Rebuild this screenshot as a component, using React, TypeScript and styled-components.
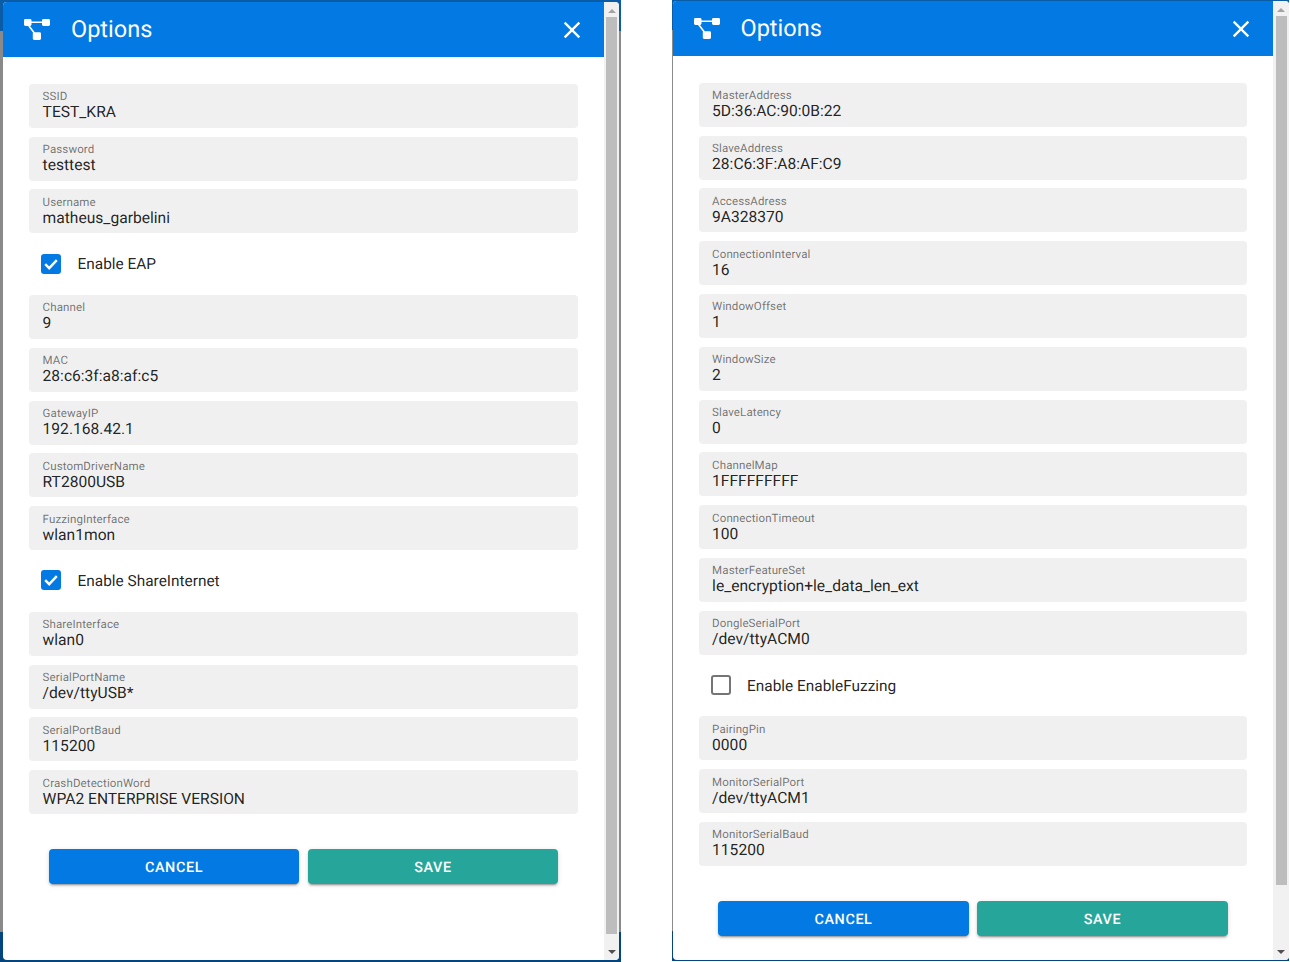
import React from "react";
import styled, { createGlobalStyle } from "styled-components";

type Item = { label: string; value: string } | { check: string; on: boolean };

const wifiItems: Item[] = [
  { label: "SSID", value: "TEST_KRA" },
  { label: "Password", value: "testtest" },
  { label: "Username", value: "matheus_garbelini" },
  { check: "Enable EAP", on: true },
  { label: "Channel", value: "9" },
  { label: "MAC", value: "28:c6:3f:a8:af:c5" },
  { label: "GatewayIP", value: "192.168.42.1" },
  { label: "CustomDriverName", value: "RT2800USB" },
  { label: "FuzzingInterface", value: "wlan1mon" },
  { check: "Enable ShareInternet", on: true },
  { label: "ShareInterface", value: "wlan0" },
  { label: "SerialPortName", value: "/dev/ttyUSB*" },
  { label: "SerialPortBaud", value: "115200" },
  { label: "CrashDetectionWord", value: "WPA2 ENTERPRISE VERSION" },
];

const bleItems: Item[] = [
  { label: "MasterAddress", value: "5D:36:AC:90:0B:22" },
  { label: "SlaveAddress", value: "28:C6:3F:A8:AF:C9" },
  { label: "AccessAdress", value: "9A328370" },
  { label: "ConnectionInterval", value: "16" },
  { label: "WindowOffset", value: "1" },
  { label: "WindowSize", value: "2" },
  { label: "SlaveLatency", value: "0" },
  { label: "ChannelMap", value: "1FFFFFFFFF" },
  { label: "ConnectionTimeout", value: "100" },
  { label: "MasterFeatureSet", value: "le_encryption+le_data_len_ext" },
  { label: "DongleSerialPort", value: "/dev/ttyACM0" },
  { check: "Enable EnableFuzzing", on: false },
  { label: "PairingPin", value: "0000" },
  { label: "MonitorSerialPort", value: "/dev/ttyACM1" },
  { label: "MonitorSerialBaud", value: "115200" },
];

function HubIcon() {
  return (
    <svg width="26" height="21" viewBox="0 0 26 21" fill="#fff">
      <rect x="0" y="0" width="7.5" height="7" rx="1.4" />
      <rect x="18" y="0" width="8" height="7" rx="1.4" />
      <rect x="8.8" y="13.3" width="8.2" height="7.7" rx="1.4" />
      <path d="M7 2.4h11.5v1.7H7z" />
      <path d="M3.6 6.6l1.5-.9 6 8-1.5.9z" />
    </svg>
  );
}

function CloseIcon() {
  return (
    <svg width="28" height="28" viewBox="0 0 24 24" fill="#fff">
      <path d="M19 6.41L17.59 5 12 10.59 6.41 5 5 6.41 10.59 12 5 17.59 6.41 19 12 13.41 17.59 19 19 17.59 13.41 12z" />
    </svg>
  );
}

function OptionsDialog({
  items,
  thumb,
  barWidth,
}: {
  items: Item[];
  thumb: number;
  barWidth: number;
}) {
  return (
    <Dialog>
      <Main>
        <Header>
          <HubIcon />
          <Title>Options</Title>
          <CloseButton>
            <CloseIcon />
          </CloseButton>
        </Header>
        <Body>
          {items.map((item) =>
            "check" in item ? (
              <CheckRow key={item.check}>
                <CheckBox $on={item.on}>
                  {item.on && (
                    <svg width="20" height="20" viewBox="0 0 20 20">
                      <path d="M4.2 10.2l4 4 7.6-8" fill="none" stroke="#fff" strokeWidth="2.4" />
                    </svg>
                  )}
                </CheckBox>
                <CheckLabel>{item.check}</CheckLabel>
              </CheckRow>
            ) : (
              <Field key={item.label}>
                <FieldLabel>{item.label}</FieldLabel>
                <FieldValue>{item.value}</FieldValue>
              </Field>
            )
          )}
          <Actions>
            <ActionButton $color="#0279e3">CANCEL</ActionButton>
            <ActionButton $color="#26a69a">SAVE</ActionButton>
          </Actions>
        </Body>
      </Main>
      <ScrollBar $width={barWidth}>
        <ArrowUp />
        <Thumb $height={thumb} />
        <ArrowDown />
      </ScrollBar>
    </Dialog>
  );
}

export default function App() {
  return (
    <Page>
      <GlobalStyle />
      <LeftFrame>
        <OptionsDialog items={wifiItems} thumb={917} barWidth={15} />
      </LeftFrame>
      <RightFrame>
        <OptionsDialog items={bleItems} thumb={869} barWidth={15.6} />
      </RightFrame>
    </Page>
  );
}

const GlobalStyle = createGlobalStyle`
  html, body {
    margin: 0;
    height: 962px;
    overflow: hidden;
    background: #fff;
    font-family: Roboto, "Liberation Sans", sans-serif;
    text-rendering: geometricPrecision;
  }
`;

const Page = styled.div`
  display: flex;
  gap: 50.5px;
  width: 1290px;
  height: 962px;
`;

const LeftFrame = styled.div`
  display: flex;
  width: 621px;
  height: 962px;
  box-sizing: border-box;
  padding: 2px 2px 2px 3px;
  background: linear-gradient(#0a5ca6 0 31px, #8a8a8a 31px 932px, #03457f 932px);
`;

const RightFrame = styled.div`
  display: flex;
  width: 617.5px;
  height: 961px;
  box-sizing: border-box;
  padding: 1px 0 1px 1px;
  background: linear-gradient(#0a5ca6 0 30px, #8a8a8a 30px 931px, #03457f 931px);
`;

const Dialog = styled.div`
  display: flex;
  flex: 1;
  min-width: 0;
  background: #fff;
  border-radius: 4px;
  overflow: hidden;
`;

const Main = styled.div`
  display: flex;
  flex-direction: column;
  flex: 1;
  min-width: 0;
`;

const Header = styled.header`
  display: flex;
  align-items: center;
  height: 55px;
  flex-shrink: 0;
  padding: 0 18px 0 21px;
  background: #0279e3;
  color: #fff;
`;

const Title = styled.h2`
  flex: 1;
  margin: 0 0 2px 21px;
  font-size: 23.5px;
  font-weight: 400;
  line-height: 32px;
`;

const CloseButton = styled.div`
  display: flex;
`;

const Body = styled.div`
  display: flex;
  flex-direction: column;
  padding: 26.8px 26px 0;
`;

const Field = styled.div`
  height: 44px;
  margin-bottom: 8.8px;
  box-sizing: border-box;
  padding: 6.5px 13.6px 0;
  background: #f0f0f0;
  border-radius: 4px;
`;

const FieldLabel = styled.div`
  font-size: 11.5px;
  line-height: 13px;
  letter-spacing: 0.12px;
  color: rgba(0, 0, 0, 0.54);
`;

const FieldValue = styled.div`
  margin-top: 1px;
  font-size: 15.6px;
  line-height: 16px;
  color: rgba(0, 0, 0, 0.87);
`;

const CheckRow = styled.div`
  display: flex;
  align-items: center;
  height: 44px;
  margin-bottom: 8.8px;
  padding-left: 12px;
`;

const CheckBox = styled.div<{ $on: boolean }>`
  width: 20px;
  height: 20px;
  box-sizing: border-box;
  border-radius: 3px;
  border: ${(p) => (p.$on ? "none" : "2px solid #757575")};
  background: ${(p) => (p.$on ? "#0279e3" : "transparent")};
  margin-bottom: 1px;
`;

const CheckLabel = styled.span`
  margin-left: 16.6px;
  font-size: 15.4px;
  color: rgba(0, 0, 0, 0.87);
`;

const Actions = styled.div`
  display: flex;
  gap: 8.6px;
  margin: 26.2px 19.8px 0;
`;

const ActionButton = styled.button<{ $color: string }>`
  flex: 1;
  height: 35px;
  padding: 1.6px 0 0;
  border: none;
  border-radius: 4px;
  background: ${(p) => p.$color};
  color: #fff;
  font-family: inherit;
  font-size: 14.4px;
  font-weight: 500;
  letter-spacing: 0.6px;
  text-rendering: geometricPrecision;
  box-shadow: 0 3px 1px -2px rgba(0, 0, 0, 0.2), 0 2px 2px 0 rgba(0, 0, 0, 0.14),
    0 1px 5px 0 rgba(0, 0, 0, 0.12);
`;

const ScrollBar = styled.div<{ $width: number }>`
  display: flex;
  flex-direction: column;
  align-items: center;
  flex: 0 0 ${(p) => p.$width}px;
  background: #f1f1f1;
`;

const ArrowUp = styled.div`
  margin-top: 7px;
  height: 0;
  border: 4px solid transparent;
  border-top: none;
  border-bottom: 4px solid #a3a3a3;
`;

const Thumb = styled.div<{ $height: number }>`
  width: 11px;
  height: ${(p) => p.$height}px;
  margin-top: 4px;
  background: #bdbdbd;
`;

const ArrowDown = styled.div`
  margin-top: auto;
  margin-bottom: 6px;
  height: 0;
  border: 4px solid transparent;
  border-bottom: none;
  border-top: 4px solid #505050;
`;
